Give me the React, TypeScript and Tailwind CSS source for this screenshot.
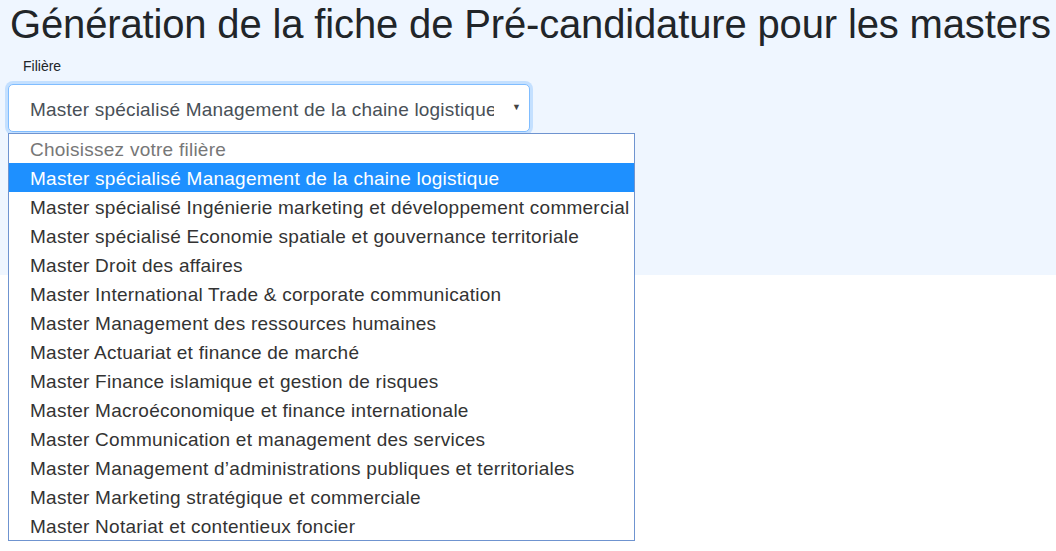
const options = [
  "Master spécialisé Management de la chaine logistique",
  "Master spécialisé Ingénierie marketing et développement commercial",
  "Master spécialisé Economie spatiale et gouvernance territoriale",
  "Master Droit des affaires",
  "Master International Trade & corporate communication",
  "Master Management des ressources humaines",
  "Master Actuariat et finance de marché",
  "Master Finance islamique et gestion de risques",
  "Master Macroéconomique et finance internationale",
  "Master Communication et management des services",
  "Master Management d’administrations publiques et territoriales",
  "Master Marketing stratégique et commerciale",
  "Master Notariat et contentieux foncier",
];

export default function App() {
  const selected = 0;

  return (
    <div className="min-h-[551px] bg-white font-['Liberation_Sans',sans-serif]">
      <div className="relative h-[275px] bg-[#eff6ff] px-2">
        <h1 className="pl-0.5 text-[40px] leading-[48px] tracking-[-0.15px] text-[#212529] whitespace-nowrap">
          Génération de la fiche de Pré-candidature pour les masters
        </h1>
        <label className="mt-[8px] block pl-[15px] text-[14px] leading-[20px] text-[#212529]">
          Filière
        </label>
        <div className="mt-[8px] flex h-[48px] w-[522px] items-center rounded-[5px] border border-[#80bdff] bg-white pl-[21px] pr-2 pt-[5px] shadow-[0_0_0_3px_#c4e0ff]">
          <span className="w-[464px] overflow-hidden whitespace-nowrap text-[19px] tracking-[0.2px] text-[#495057]">
            {options[selected]}
          </span>
          <span className="ml-auto -mt-[5px] text-[9px] text-[#444]">▼</span>
        </div>

        {/* opened native list */}
        <ul className="absolute left-2 top-[133px] z-10 w-[627px] border border-[#6f94d0] bg-white text-[19px] tracking-[0.25px]">
          <li className="h-[29px] pl-[21px] leading-[31px] text-[#777]">
            Choisissez votre filière
          </li>
          {options.map((opt, i) => (
            <li
              key={opt}
              className={`h-[29px] whitespace-nowrap pl-[21px] leading-[31px] ${
                i === selected ? "bg-[#1e90ff] text-white" : "text-[#333]"
              }`}
            >
              {opt}
            </li>
          ))}
        </ul>
      </div>
    </div>
  );
}
